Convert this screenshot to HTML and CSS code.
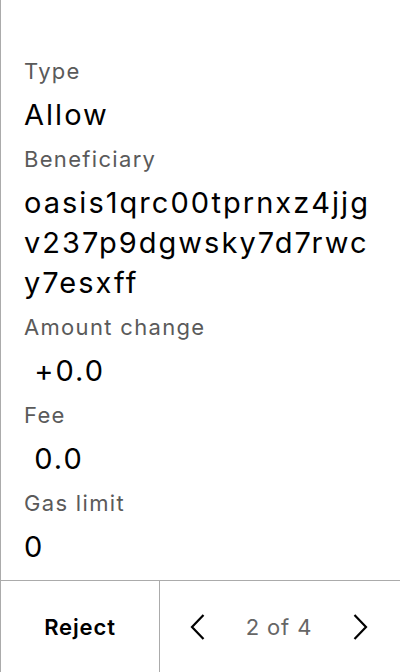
FILE: index.html
```html
<!DOCTYPE html>
<html lang="en">
<head>
<meta charset="utf-8">
<title>Transaction</title>
<link rel="stylesheet" href="styles.css">
</head>
<body>
<div class="app">
  <main class="details">
    <div class="label">Type</div>
    <div class="value">Allow</div>
    <div class="label">Beneficiary</div>
    <div class="value address">oasis1qrc00tprnxz4jjgv237p9dgwsky7d7rwcy7esxff</div>
    <div class="label">Amount change</div>
    <div class="value">&nbsp;+0.0</div>
    <div class="label">Fee</div>
    <div class="value">&nbsp;0.0</div>
    <div class="label">Gas limit</div>
    <div class="value">0</div>
  </main>
  <footer class="footer">
    <div class="reject">Reject</div>
    <div class="pager">
      <svg class="chev" width="16" height="28" viewBox="0 0 16 28"><path d="M13.5 2 L2 14 L13.5 26" fill="none" stroke="#000" stroke-width="2.2"/></svg>
      <span class="count">2 of 4</span>
      <svg class="chev" width="16" height="28" viewBox="0 0 16 28"><path d="M2.5 2 L14 14 L2.5 26" fill="none" stroke="#000" stroke-width="2.2"/></svg>
    </div>
  </footer>
</div>
</body>
</html>
```
FILE: styles.css
```css
html, body {
  margin: 0;
  padding: 0;
  background: #fff;
}
body {
  font-family: Inter, "Noto Sans", sans-serif;
  color: #000;
}
.app {
  width: 399px;
  height: 672px;
  border-left: 1px solid #ababab;
  display: flex;
  flex-direction: column;
}
.details {
  flex: 1;
  padding: 57px 22px 0 23px;
  display: flex;
  flex-direction: column;
}
.label {
  font-size: 22px;
  line-height: 28px;
  letter-spacing: 0.06em;
  color: #5a5a5a;
}
.label + .value {
  margin-top: 10px;
}
.value + .label {
  margin-top: 10px;
}
.value {
  font-size: 29px;
  line-height: 40px;
  letter-spacing: 0.07em;
  color: #000;
}
.address {
  word-break: break-all;
}
.footer {
  height: 91px;
  border-top: 1px solid #ababab;
  display: grid;
  grid-template-columns: 159px 1fr;
}
.reject {
  border-right: 1px solid #ababab;
  display: flex;
  align-items: center;
  justify-content: center;
  font-size: 22px;
  font-weight: 600;
  letter-spacing: 0.04em;
}
.pager {
  display: flex;
  align-items: center;
  justify-content: space-between;
  padding: 0 32px 0 30px;
}
.count {
  font-size: 22px;
  letter-spacing: 0.04em;
  color: #666;
}
.chev {
  display: block;
}
```
